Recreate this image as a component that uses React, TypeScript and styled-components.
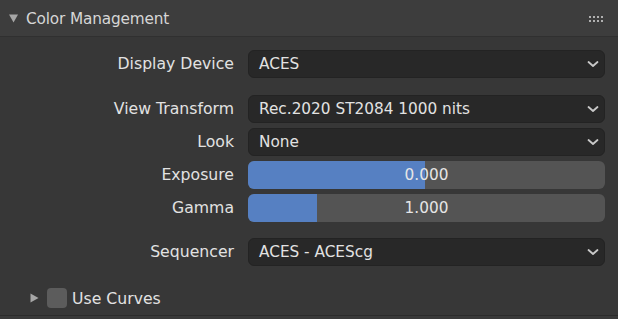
import React from "react";
import styled, { createGlobalStyle } from "styled-components";

const Global = createGlobalStyle`
  html, body { margin: 0; padding: 0; background: #393939; }
  body { font-family: "DejaVu Sans", sans-serif; -webkit-font-smoothing: antialiased; }
`;

const Panel = styled.div`
  width: 618px;
  height: 316px;
  background: #373737;
  border-bottom: 1px solid #2b2b2b;
  box-sizing: border-box;
`;

const Header = styled.div`
  height: 37px;
  box-sizing: border-box;
  background: #3d3d3d;
  border-bottom: 1px solid #303030;
  display: flex;
  align-items: center;
  padding: 0 15px 0 9px;
`;

const Title = styled.span`
  font-size: 15.3px;
  color: #d6d6d6;
  margin-left: 8px;
  margin-top: 2px;
  flex: 1;
  letter-spacing: -0.15px;
`;

const Grip = styled.div`
  display: grid;
  grid-template-columns: repeat(4, 2px);
  grid-auto-rows: 2px;
  column-gap: 2px;
  row-gap: 2px;
  margin-top: 1px;
  span { background: #b0b0b0; }
`;

const Body = styled.div`
  display: grid;
  grid-template-columns: 234px 357px;
  column-gap: 14px;
  padding: 13px 13px 0 0;
  align-items: center;
`;

const Label = styled.div`
  font-size: 15.7px;
  color: #e2e2e2;
  text-align: right;
  height: 28px;
  line-height: 28px;
`;

const Spacer = styled.div<{ $h: number }>`
  grid-column: 1 / -1;
  height: ${(p) => p.$h}px;
`;

const Dropdown = styled.div`
  height: 28px;
  box-sizing: border-box;
  background: #282828;
  border: 1px solid #232323;
  border-radius: 6px;
  display: flex;
  align-items: center;
  padding: 0 4px 0 10px;
  font-size: 15.3px;
  color: #e2e2e2;
  span { flex: 1; }
`;

const Slider = styled.div`
  position: relative;
  height: 28px;
  background: #545454;
  border-radius: 6px;
  overflow: hidden;
  display: flex;
  align-items: center;
  justify-content: center;
  font-size: 15.3px;
  color: #e6e6e6;
`;

const Fill = styled.div`
  position: absolute;
  left: 0;
  top: 0;
  bottom: 0;
  background: #5680c2;
`;

const SliderText = styled.span`
  position: relative;
`;

const CurvesRow = styled.div`
  display: flex;
  align-items: center;
  padding: 22px 0 0 30px;
  font-size: 15.7px;
  color: #e2e2e2;
`;

const Check = styled.div`
  width: 20px;
  height: 20px;
  border-radius: 4px;
  background: #5c5c5c;
  margin: 0 5px 0 8px;
`;

const Chevron = () => (
  <svg width="14" height="10" viewBox="0 0 14 10">
    <path d="M2.5 3 L7 7 L11.5 3" fill="none" stroke="#c8c8c8" strokeWidth="1.8" strokeLinecap="round" strokeLinejoin="round" />
  </svg>
);

const Select = ({ value }: { value: string }) => (
  <Dropdown>
    <span>{value}</span>
    <Chevron />
  </Dropdown>
);

const Range = ({ value, frac }: { value: string; frac: number }) => (
  <Slider>
    <Fill style={{ width: `${frac * 100}%` }} />
    <SliderText>{value}</SliderText>
  </Slider>
);

export default function App() {
  return (
    <>
      <Global />
      <Panel>
        <Header>
          <svg width="9" height="9" viewBox="0 0 9 9">
            <path d="M0 0.5 L9 0.5 L4.5 8.5 Z" fill="#a6a6a6" />
          </svg>
          <Title>Color Management</Title>
          <Grip>
            {Array.from({ length: 8 }).map((_, i) => (
              <span key={i} />
            ))}
          </Grip>
        </Header>
        <Body>
          <Label>Display Device</Label>
          <Select value="ACES" />
          <Spacer $h={17} />
          <Label>View Transform</Label>
          <Select value="Rec.2020 ST2084 1000 nits" />
          <Spacer $h={5} />
          <Label>Look</Label>
          <Select value="None" />
          <Spacer $h={5} />
          <Label>Exposure</Label>
          <Range value="0.000" frac={0.496} />
          <Spacer $h={5} />
          <Label>Gamma</Label>
          <Range value="1.000" frac={0.194} />
          <Spacer $h={16} />
          <Label>Sequencer</Label>
          <Select value="ACES - ACEScg" />
        </Body>
        <CurvesRow>
          <svg width="9" height="10" viewBox="0 0 9 10">
            <path d="M0.5 0.5 L8.5 5 L0.5 9.5 Z" fill="#a6a6a6" />
          </svg>
          <Check />
          <span>Use Curves</span>
        </CurvesRow>
      </Panel>
    </>
  );
}
